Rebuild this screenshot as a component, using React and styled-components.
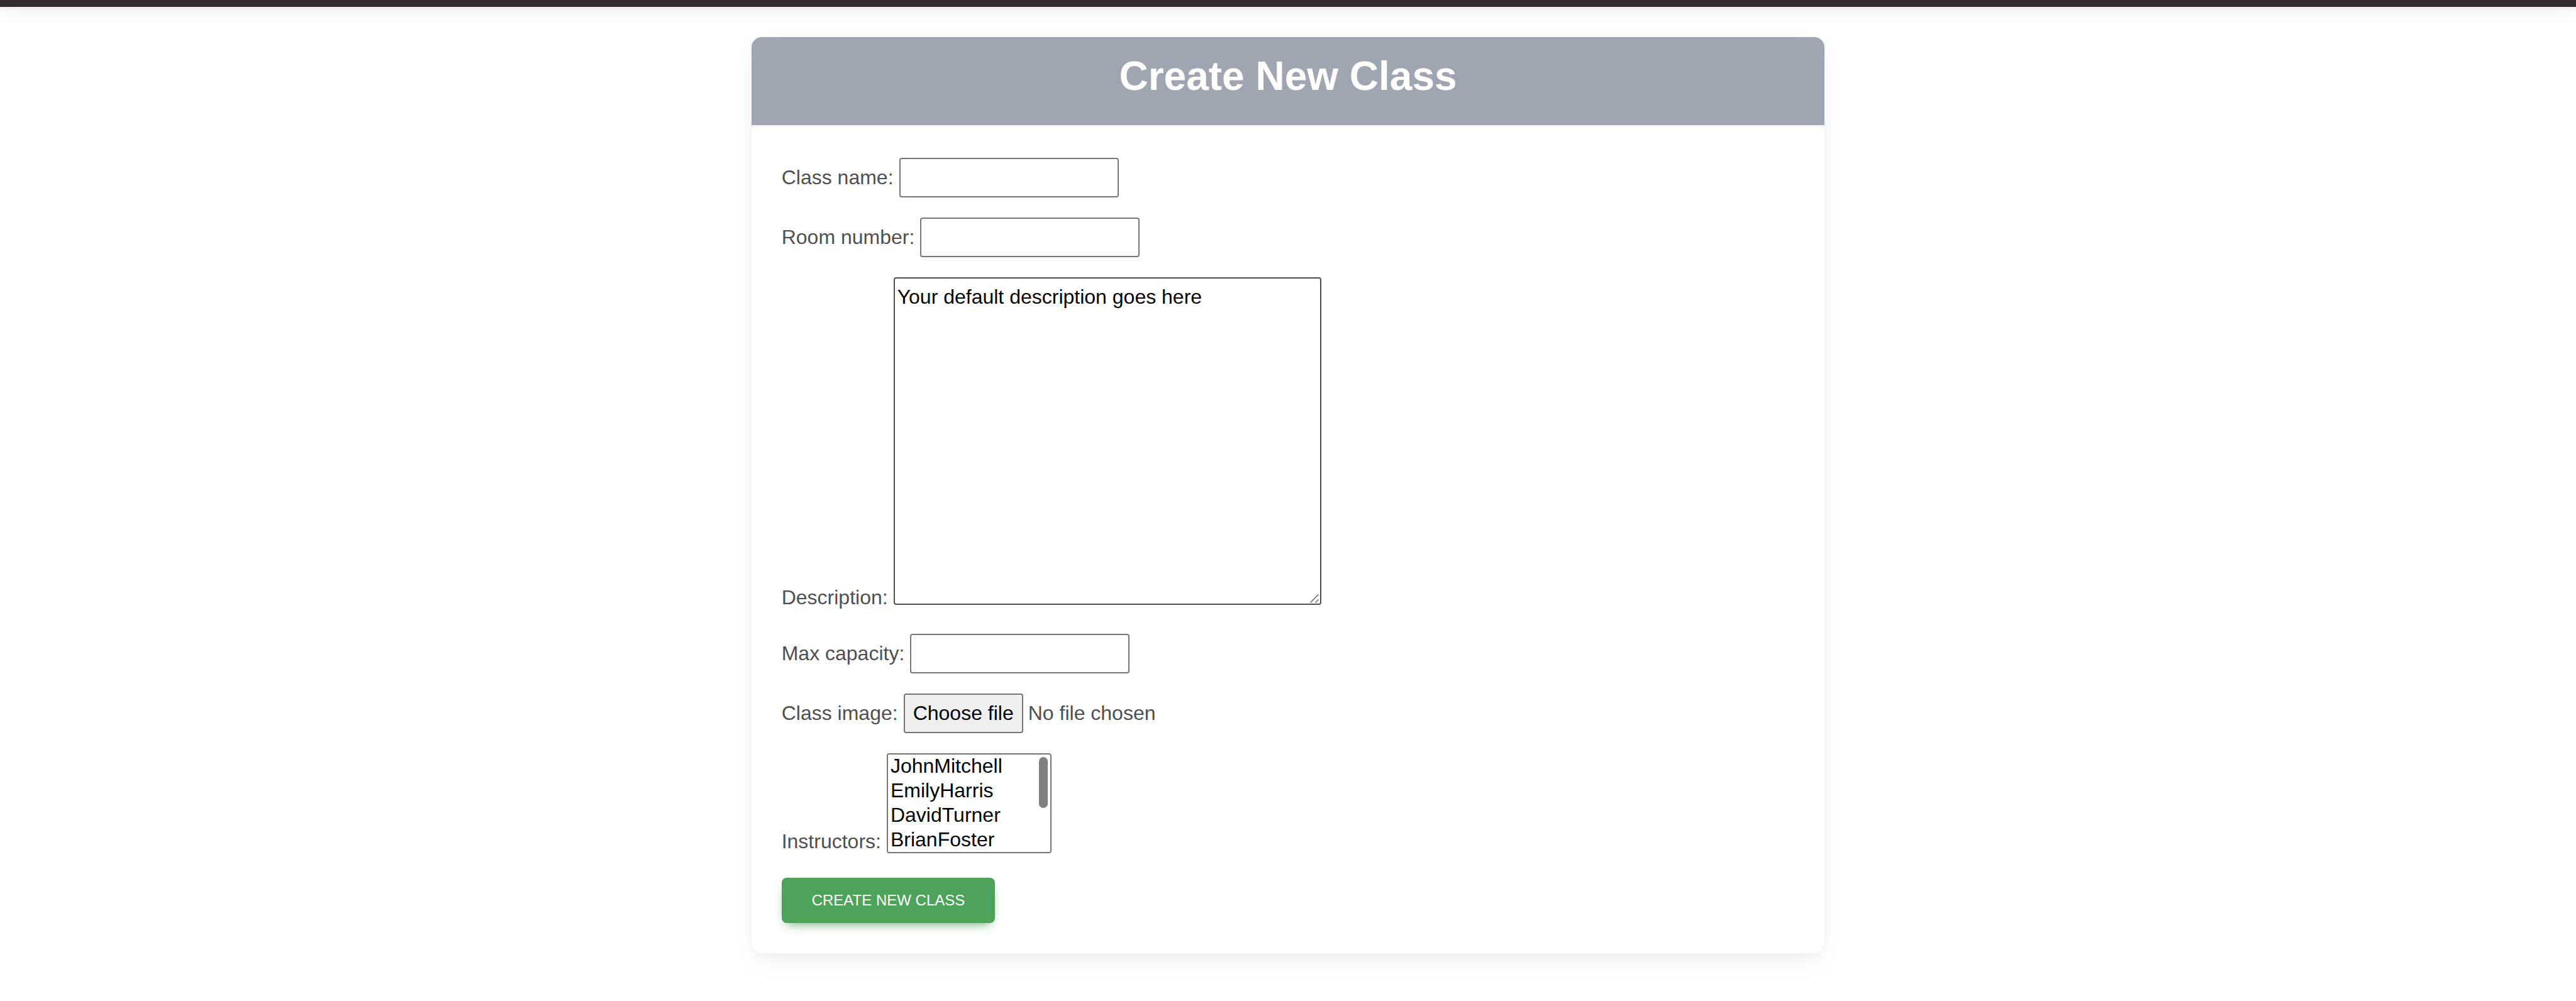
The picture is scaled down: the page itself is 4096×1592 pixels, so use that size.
import React, { useState } from "react";
import styled, { createGlobalStyle } from "styled-components";

const GlobalStyle = createGlobalStyle`
  *, *::before, *::after { box-sizing: border-box; }
  body {
    margin: 0;
    background: #fff;
    color: #4f4f4f;
    font: 400 32px/51px "Liberation Sans", Arial, Helvetica, sans-serif;
  }
`;

const TopBar = styled.header`
  height: 11px;
  background: #322c2b;
  box-shadow: 0 8px 24px rgba(0, 0, 0, 0.07), 0 4px 8px rgba(0, 0, 0, 0.05);
`;

const Page = styled.main`
  display: flex;
  justify-content: center;
  padding: 48px 0 76px;
`;

const Card = styled.section`
  width: 41.6667%;
  border-radius: 16px;
  background: #fff;
  box-shadow: 0 4px 30px -6px rgba(0, 0, 0, 0.07), 0 20px 40px -4px rgba(0, 0, 0, 0.04);
`;

const CardHeader = styled.div`
  padding: 24px 48px 40px;
  border-bottom: 4px solid #f5f5f5;
  border-radius: 16px 16px 0 0;
  background: #9fa5b1;
  background-clip: padding-box;
  text-align: center;
`;

const Title = styled.h1`
  margin: 0;
  color: #fff;
  font-size: 64px;
  font-weight: 700;
  line-height: 76px;
`;

const Form = styled.form`
  display: flex;
  flex-direction: column;
  align-items: flex-start;
  gap: 32px;
  padding: 48px;
`;

const Row = styled.div`
  display: flex;
  align-items: ${(p) => (p.$tall ? "flex-end" : "center")};
  gap: 9px;
  white-space: nowrap;
`;

const TextInput = styled.input`
  width: 349px;
  height: 63px;
  padding: 2px 4px;
  border: 2px solid #767676;
  border-radius: 4px;
  background: #fff;
  color: #000;
  font: inherit;
  appearance: none;
`;

const Overlaid = styled.span`
  display: flex;
  position: relative;
  margin-bottom: ${(p) => p.$drop}px;
`;

const TextArea = styled.textarea`
  width: 680px;
  height: 521px;
  padding: 4px;
  border: 2px solid #4f4f4f;
  border-radius: 4px;
  background: #fff;
  color: #000;
  font: inherit;
  resize: both;

  &::-webkit-resizer {
    background: transparent;
  }
`;

const Grip = styled.svg`
  position: absolute;
  right: 4px;
  bottom: 3px;
  width: 14px;
  height: 14px;
  pointer-events: none;
`;

const FilePicker = styled.span`
  display: flex;
  position: relative;
  gap: 8px;
  align-items: center;
`;

const FileInput = styled.input`
  position: absolute;
  inset: 0;
  width: 100%;
  opacity: 0;
`;

const FileButton = styled.span`
  height: 63px;
  padding: 4px 13px;
  border: 2px solid #767676;
  border-radius: 4px;
  background: #efefef;
  color: #000;
`;

const ListBox = styled.select`
  width: 262px;
  height: 159px;
  padding: 0;
  border: 2px solid #767676;
  border-radius: 4px;
  background: #fff;
  color: #000;
  font: inherit;
  overflow-y: scroll;
  scrollbar-width: none;

  option {
    min-height: 39px;
    padding: 0 4px 2px;
    line-height: 37px;
  }
`;

const Thumb = styled.span`
  position: absolute;
  top: 6px;
  right: 6px;
  width: 14px;
  height: 81px;
  border-radius: 7px;
  background: #808080;
  pointer-events: none;
`;

const SubmitButton = styled.button`
  padding: 16px 48px;
  border: 0;
  border-radius: 8px;
  background: #4da359;
  box-shadow: 0 8px 18px -8px #4da359;
  color: #fff;
  font: 400 24px/40px "Liberation Sans", Arial, Helvetica, sans-serif;
  text-transform: uppercase;
`;

const instructors = [
  "JohnMitchell",
  "EmilyHarris",
  "DavidTurner",
  "BrianFoster",
  "LauraBennett",
  "KevinBrooks",
  "SarahCollins",
];

function InstructorList({ id }) {
  const [shift, setShift] = useState(0);
  const follow = (e) => {
    const { scrollTop, scrollHeight, clientHeight } = e.currentTarget;
    setShift((scrollTop / Math.max(1, scrollHeight - clientHeight)) * (clientHeight - 89));
  };
  return (
    <Overlaid $drop={7}>
      <ListBox id={id} multiple size={4} onScroll={follow}>
        {instructors.map((name) => (
          <option key={name}>{name}</option>
        ))}
      </ListBox>
      <Thumb style={{ marginTop: shift }} />
    </Overlaid>
  );
}

export default function App() {
  const [fileName, setFileName] = useState("No file chosen");
  return (
    <>
      <GlobalStyle />
      <TopBar />
      <Page>
        <Card>
          <CardHeader>
            <Title>Create New Class</Title>
          </CardHeader>
          <Form onSubmit={(e) => e.preventDefault()}>
            <Row>
              <label htmlFor="name">Class name:</label>
              <TextInput id="name" type="text" />
            </Row>
            <Row>
              <label htmlFor="room">Room number:</label>
              <TextInput id="room" type="text" />
            </Row>
            <Row $tall>
              <label htmlFor="description">Description:</label>
              <Overlaid $drop={14}>
                <TextArea id="description" defaultValue="Your default description goes here" />
                <Grip viewBox="0 0 14 14" fill="none" stroke="#666" strokeWidth="1.5" aria-hidden="true">
                  <path d="M0.5 13.5 13.5 0.5M8.5 13.5 13.5 8.5" />
                </Grip>
              </Overlaid>
            </Row>
            <Row>
              <label htmlFor="capacity">Max capacity:</label>
              <TextInput id="capacity" type="number" />
            </Row>
            <Row>
              <label htmlFor="image">Class image:</label>
              <FilePicker>
                <FileButton>Choose file</FileButton>
                <span>{fileName}</span>
                <FileInput
                  id="image"
                  type="file"
                  onChange={(e) => setFileName(e.target.files[0]?.name ?? "No file chosen")}
                />
              </FilePicker>
            </Row>
            <Row $tall>
              <label htmlFor="instructors">Instructors:</label>
              <InstructorList id="instructors" />
            </Row>
            <SubmitButton type="submit">Create new class</SubmitButton>
          </Form>
        </Card>
      </Page>
    </>
  );
}
